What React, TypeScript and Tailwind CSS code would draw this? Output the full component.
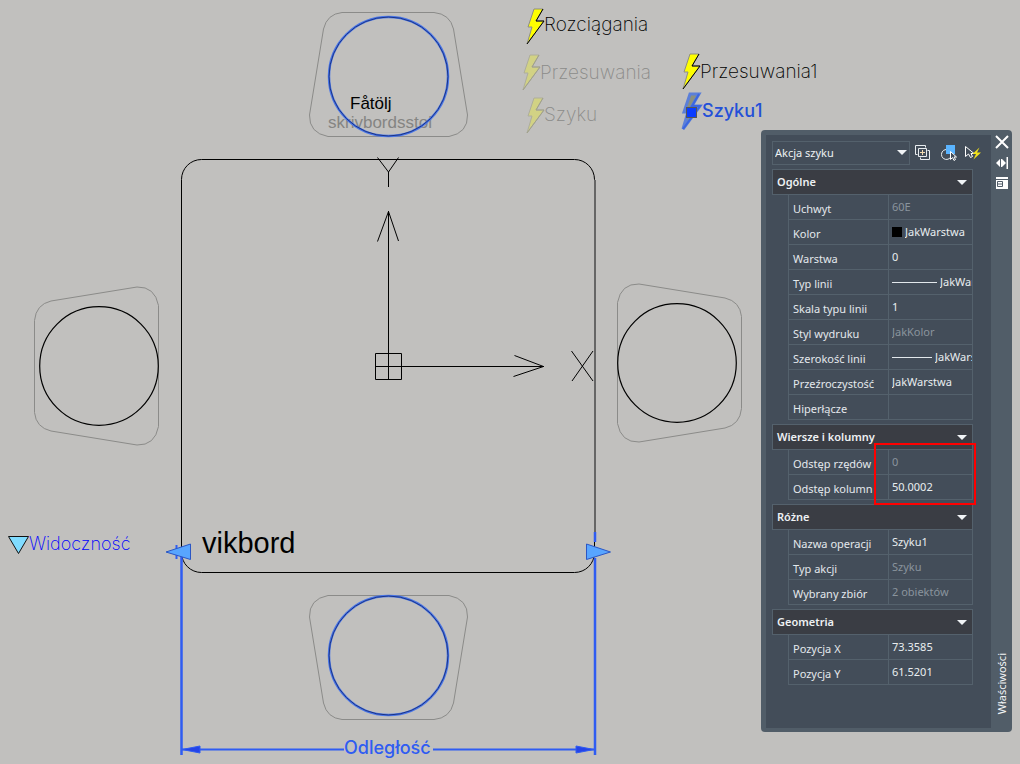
import { useState } from 'react';

interface Row {
  id: string;
  label: string;
  value: string;
  readOnly?: boolean;
  swatch?: boolean;
  line?: 'long' | 'short';
}

interface Section {
  title: string;
  rows: Row[];
  marked?: boolean;
}

const SECTIONS: Section[] = [
  {
    title: 'Ogólne',
    rows: [
      { id: 'handle', label: 'Uchwyt', value: '60E', readOnly: true },
      { id: 'color', label: 'Kolor', value: 'JakWarstwa', swatch: true },
      { id: 'layer', label: 'Warstwa', value: '0' },
      { id: 'linetype', label: 'Typ linii', value: 'JakWarstwa', line: 'long' },
      { id: 'ltscale', label: 'Skala typu linii', value: '1' },
      { id: 'plotstyle', label: 'Styl wydruku', value: 'JakKolor', readOnly: true },
      { id: 'lineweight', label: 'Szerokość linii', value: 'JakWarstwa', line: 'short' },
      { id: 'transparency', label: 'Przeźroczystość', value: 'JakWarstwa' },
      { id: 'hyperlink', label: 'Hiperłącze', value: '' },
    ],
  },
  {
    title: 'Wiersze i kolumny',
    marked: true,
    rows: [
      { id: 'rowoffset', label: 'Odstęp rzędów', value: '0', readOnly: true },
      { id: 'coloffset', label: 'Odstęp kolumn', value: '50.0002' },
    ],
  },
  {
    title: 'Różne',
    rows: [
      { id: 'actionname', label: 'Nazwa operacji', value: 'Szyku1' },
      { id: 'actiontype', label: 'Typ akcji', value: 'Szyku', readOnly: true },
      { id: 'selection', label: 'Wybrany zbiór', value: '2 obiektów', readOnly: true },
    ],
  },
  {
    title: 'Geometria',
    rows: [
      { id: 'posx', label: 'Pozycja X', value: '73.3585' },
      { id: 'posy', label: 'Pozycja Y', value: '61.5201' },
    ],
  },
];

// Chair outline, drawn for the seat above the table
const CHAIR = 'M342 12.5H434Q450 14 453.500 29L467.500 115Q468 133 449 136.500H328Q309 133 309.500 115L323.500 29Q327 14 342 12.500Z';

function Bolt({ x, y, faded, selected }: { x: number; y: number; faded?: boolean; selected?: boolean }) {
  const fill = selected ? '#8a9080' : faded ? '#d2d284' : '#ffff00';
  const light = selected ? '#5b7fd9' : faded ? '#aeae9c' : '#8f8f80';
  const dark = selected ? '#3b66e0' : faded ? '#a0a08c' : '#000000';
  return (
    <g transform={`translate(${x} ${y})`}>
      <path d="M8 1H17L10 13H18L1 36L6 19H2Z" fill={fill} stroke={light} strokeWidth={selected ? 3 : 1} />
      <path d="M17 1L10 13H18L1 36" fill="none" stroke={dark} strokeWidth={selected ? 2 : 1} />
    </g>
  );
}

function Drawing() {
  return (
    <svg width="1020" height="764" viewBox="0 0 1020 764" className="block shrink-0" fill="none">
      {/* table */}
      <rect x="181.500" y="159.500" width="413" height="413" rx="20" stroke="#000" />
      <path d="M595 180V532" stroke="#666" strokeWidth="2" />

      {/* chairs */}
      <g stroke="#8b8b89">
        <path d={CHAIR} />
        <path d={CHAIR} transform="translate(0 732) scale(1 -1)" />
        <path d={CHAIR} transform="translate(22 754.500) rotate(-90)" />
        <path d={CHAIR} transform="translate(754 -25.500) rotate(90)" />
      </g>
      <g stroke="#000" strokeWidth="1.200">
        <circle cx="99" cy="366" r="59.300" />
        <circle cx="677" cy="363" r="59.300" />
      </g>

      <g fontFamily="'Liberation Sans', Arial, sans-serif">
        <text x="350" y="109" fontSize="17" fill="#000">Fåtölj</text>
        <text x="328" y="128" fontSize="17" fill="#858583">skrivbordsstol</text>
        <text x="202" y="553" fontSize="29" fill="#000">vikbord</text>
      </g>
      <g>
        <circle cx="388.500" cy="76.500" r="59.500" stroke="#4a76e8" strokeWidth="2.500" />
        <circle cx="388.500" cy="76.500" r="59.500" stroke="#1b3486" />
        <circle cx="388.500" cy="655.500" r="59.500" stroke="#4a76e8" strokeWidth="2.500" />
        <circle cx="388.500" cy="655.500" r="59.500" stroke="#1b3486" />
      </g>

      {/* UCS icon */}
      <g stroke="#000">
        <path d="M375.500 353.500H401.500V379.500H375.500ZM375 366.500H544M388.500 380V211" />
        <path d="M377.500 241.500L388.500 211.500L398.500 241M514.500 355.500L543.500 366.500L513.500 376.500" />
        <path d="M571.500 351L593 381M593 351L572 381M377.500 157.500L388.500 172L398.500 157.500M388.500 172V187" />
      </g>

      {/* linear parameter */}
      <g stroke="#2f5cf2" strokeWidth="2">
        <path d="M181.500 556V755M595 532V542M595 558V755" strokeWidth="2.500" />
        <path d="M182 749.500H344M433 749.500H595" />
      </g>
      <path d="M182 749.500L200 746V753ZM594 749.500L576 746V753Z" fill="#2443e8" stroke="#2f5cf2" />
      <path d="M176.500 545V559" stroke="#2f5cf2" strokeWidth="2" />
      <path d="M166 552L190.500 544V559.500ZM610.500 552L586.500 544V559.500Z" fill="#58a5ff" stroke="#2b56c4" />

      {/* visibility grip */}
      <path d="M8.500 536.500H28.500L18.500 553.500Z" fill="#80dcff" stroke="#111" />

      <Bolt x={526} y={8} />
      <Bolt x={522} y={54} faded />
      <Bolt x={526} y={97} faded />
      <Bolt x={682} y={53} />
      <Bolt x={682} y={93} selected />
      <rect x="686.500" y="107.500" width="10" height="10" fill="#0a3cff" stroke="#555" />

      <g fontFamily="Inter, 'Noto Sans', sans-serif" fontWeight="200" fontSize="19">
        <text x="544" y="31" fill="#000">Rozciągania</text>
        <text x="540" y="79" fill="#8b8b89">Przesuwania</text>
        <text x="544" y="121" fill="#8b8b89">Szyku</text>
        <text x="700" y="78" fill="#000">Przesuwania1</text>
        <text x="702" y="117" fill="#2450d8" fontSize="18" fontWeight="500">Szyku1</text>
        <text x="29" y="550" fill="#0000ff" fontSize="18">Widoczność</text>
        <text x="344" y="754" fill="#2f5cf2" fontSize="18" fontWeight="500">Odległość</text>
      </g>
    </svg>
  );
}

function Arrow() {
  return (
    <svg width="10" height="5" viewBox="0 0 10 5" className="shrink-0">
      <path d="M0 0H10L5 5Z" fill="#f0f3f5" />
    </svg>
  );
}

function PropertyRow({ row }: { row: Row }) {
  return (
    <div className="flex h-[25px] border-b border-l border-r border-[#54616c]">
      <label htmlFor={row.id} className="w-[100px] shrink-0 overflow-hidden whitespace-nowrap border-r border-[#54616c] pl-1 pt-1 leading-5 text-[#e3e8ec]">
        {row.label}
      </label>
      <div className="flex min-w-0 flex-1 items-center gap-[3px] pl-[3px]">
        {row.swatch && <span className="size-[10px] shrink-0 bg-black" />}
        {row.line && <span className={`h-px shrink-0 bg-[#e3e8ec] ${row.line === 'long' ? 'w-[45px]' : 'w-10'}`} />}
        <input
          id={row.id}
          defaultValue={row.value}
          readOnly={row.readOnly}
          className={`w-full min-w-0 bg-transparent pb-px outline-none ${row.readOnly ? 'text-[#8a949d]' : 'text-[#e9edf0]'}`}
        />
      </div>
    </div>
  );
}

function PropertySection({ section }: { section: Section }) {
  const [open, setOpen] = useState(true);
  return (
    <section className={section.marked ? 'relative z-10' : ''}>
      <button
        onClick={() => setOpen(o => !o)}
        className="flex h-[26px] w-full items-center justify-between border border-[#54616c] bg-[#3a3d44] pl-1 pr-[5px] font-semibold text-[#eef1f3]"
      >
        {section.title}
        <Arrow />
      </button>
      {open && <div className="pl-4">{section.rows.map(r => <PropertyRow key={r.id} row={r} />)}</div>}
      {section.marked && <div className="pointer-events-none absolute -right-[3px] -bottom-[5px] left-[102px] top-[19px] border-2 border-[#ff0000]" />}
    </section>
  );
}

function Toolbar() {
  return (
    <div className="flex items-center gap-[5px]">
      <div className="relative w-[138px] shrink-0">
        <select aria-label="Typ obiektu" className="h-6 w-full appearance-none border border-[#54616c] bg-transparent pl-[2px] text-[#eef1f3] outline-none">
          <option>Akcja szyku</option>
        </select>
        <span className="pointer-events-none absolute right-[3px] top-[9px]"><Arrow /></span>
      </div>
      <button aria-label="Przełącz PICKADD" className="shrink-0">
        <svg width="16" height="16" viewBox="0 0 16 16" fill="none" stroke="#e8ecef">
          <path d="M2.500 9.500H0.500V0.500H10.500V2.500M12.500 5.500H14.500V14.500H5.500V12.500" />
          <path d="M3.500 3.500H11.500V11.500H3.500Z" />
          <path d="M7.500 5V10M5 7.500H10" stroke="#f5dcb0" />
        </svg>
      </button>
      <button aria-label="Wybierz obiekty" className="ml-[5px] shrink-0">
        <svg width="16" height="16" viewBox="0 0 16 16" fill="none">
          <path d="M5 4.500A5 5 0 1 0 9 13" stroke="#e8ecef" />
          <path d="M5 0H14V9H5Z" fill="#5ab4ff" />
          <path d="M9.500 6.500V14.500L11.500 12.500L13 15.500L14.500 14.500L13 12H15.500Z" fill="#434d59" stroke="#fff" />
        </svg>
      </button>
      <button aria-label="Szybki wybór" className="ml-[3px] shrink-0">
        <svg width="16" height="16" viewBox="0 0 16 16" fill="none">
          <path d="M0.500 1.500V11.500L3.500 9L5.500 12.500L7.500 11.500L6 8.500H9Z" stroke="#fff" />
          <path d="M14.500 2.500L7.500 9H11L8.500 14.500L16 7.500H12Z" fill="#f2e21b" />
        </svg>
      </button>
    </div>
  );
}

export default function App() {
  return (
    <main className="relative flex min-h-screen overflow-hidden bg-[#c1c0be]">
      <Drawing />
      <aside className="absolute left-[761px] top-[130px] flex rounded-[4px] bg-[#515d68] p-[5px] pr-0 pb-[4px] font-['Noto_Sans',sans-serif] text-[11px] leading-4">
        <div className="w-[225px] bg-[#434d59] pb-[43px] pl-[6px] pr-[18px] pt-[6px]">
          <div className="mb-[4px]"><Toolbar /></div>
          <div className="flex flex-col gap-1">
            {SECTIONS.map(s => <PropertySection key={s.title} section={s} />)}
          </div>
        </div>
        <div className="flex w-[21px] flex-col items-center justify-between pb-[14px]">
          <div className="flex flex-col items-center gap-2">
            <button aria-label="Zamknij">
              <svg width="14" height="14" viewBox="0 0 14 14"><path d="M1 1L13 13M13 1L1 13" stroke="#fff" strokeWidth="2" /></svg>
            </button>
            <button aria-label="Autoukrywanie">
              <svg width="12" height="12" viewBox="0 0 12 12" fill="#fff"><path d="M4 2V10L0 6ZM5 2H6V10H5ZM6 2L10 6L6 10ZM10.500 0H12V12H10.500Z" /></svg>
            </button>
            <button aria-label="Właściwości palety">
              <svg width="12" height="12" viewBox="0 0 12 12"><path d="M0 0H12V2H0ZM0 3H12V12H0Z" fill="#fff" /><path d="M1.500 4.500H6.500V9.500H1.500ZM2 7H6" fill="none" stroke="#515d68" /></svg>
            </button>
          </div>
          <span className="rotate-180 text-[#f3f5f6] [writing-mode:vertical-rl]">Właściwości</span>
        </div>
      </aside>
    </main>
  );
}
